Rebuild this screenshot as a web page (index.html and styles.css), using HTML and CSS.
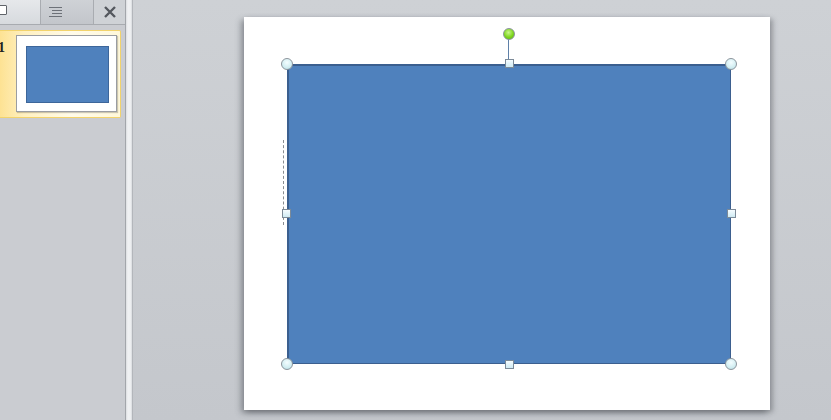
FILE: index.html
```html
<!DOCTYPE html>
<html>
<head>
<meta charset="utf-8">
<link rel="stylesheet" href="styles.css">
</head>
<body>
<div class="app">
  <aside class="panel">
    <div class="tabs">
      <div class="tab tab-slides"><span class="tab-icon"></span></div>
      <div class="tab tab-outline">
        <svg width="15" height="12" viewBox="0 0 15 12"><g stroke="#6d7178" stroke-width="1"><path d="M1 1.5h13M4 4.5h10M4 7.5h10M1 10.5h13"/></g></svg>
      </div>
      <div class="tab-close">
        <svg width="14" height="14" viewBox="0 0 14 14"><path d="M2 2L12 12M12 2L2 12" stroke="#54585e" stroke-width="2.4"/></svg>
      </div>
    </div>
    <div class="thumbs">
      <div class="thumb-row">
        <span class="num">1</span>
        <div class="thumb"><div class="thumb-shape"></div></div>
      </div>
    </div>
  </aside>
  <div class="splitter"></div>
  <main class="stage">
    <div class="slide">
      <div class="shape-wrap">
        <div class="shape"></div>
        <span class="guide"></span>
        <span class="rot-line"></span>
        <span class="rot"></span>
        <span class="h c tl"></span>
        <span class="h c tr"></span>
        <span class="h c bl"></span>
        <span class="h c br"></span>
        <span class="h s tm"></span>
        <span class="h s bm"></span>
        <span class="h s ml"></span>
        <span class="h s mr"></span>
      </div>
    </div>
  </main>
</div>
</body>
</html>
```
FILE: styles.css
```css
html, body { margin: 0; padding: 0; }
body { width: 831px; height: 420px; overflow: hidden; font-family: "Liberation Serif", serif; }
.app { display: flex; height: 420px; }
.panel { width: 125px; flex: none; background: #caccd1; display: flex; flex-direction: column; }
.tabs { height: 24px; display: flex; border-bottom: 1px solid #a8abb0; background: #d9dce0; }
.tab-slides { width: 40px; background: linear-gradient(#e6e8eb, #d7dade); position: relative; }
.tab-icon { position: absolute; left: -3px; top: 5px; width: 8px; height: 8px; border: 1px solid #60646a; background: #fff; border-radius: 1px; }
.tab-outline { width: 54px; background: linear-gradient(#cfd2d6, #c3c6cb); border-left: 1px solid #a9acb1; border-right: 1px solid #a9acb1; display: flex; align-items: center; padding-left: 7px; box-sizing: border-box; }
.tab-close { flex: 1; display: flex; align-items: center; justify-content: center; background: #cfd2d6; }
.thumbs { padding-top: 5px; }
.thumb-row { width: 121px; height: 88px; border: 1px solid #f2d36c; border-left: none; border-radius: 0 2px 2px 0; background: linear-gradient(90deg, #fde293 0%, #fff0c0 20%, #fffbea 60%, #fff8da 100%); display: flex; align-items: flex-start; box-sizing: border-box; padding-top: 4px; }
.num { font-weight: bold; font-size: 14px; color: #222; margin-left: -2px; padding-top: 6px; line-height: 14px; }
.thumb { margin-left: 11px; width: 101px; height: 77px; background: #fff; border: 1px solid #9a9da2; box-shadow: 1px 1px 1px rgba(0,0,0,0.2); box-sizing: border-box; padding: 10px 0 0 9px; }
.thumb-shape { width: 83px; height: 57px; background: #4f81bd; border: 1px solid #3d669a; box-sizing: border-box; }
.splitter { width: 8px; flex: none; box-sizing: border-box; border-left: 1px solid #a3a6ab; border-right: 1px solid #b3b6bb; background: linear-gradient(90deg, #dcdee1 0, #f1f2f4 2px, #eceef0 5px, #d2d5d9 6px); }
.stage { flex: 1; background: linear-gradient(#ced1d5, #c4c7cc); padding: 17px 0 0 111px; box-sizing: border-box; }
.slide { width: 526px; height: 393px; background: #fff; box-shadow: -3px 3px 6px rgba(60,64,70,0.45), 3px 2px 5px rgba(60,64,70,0.35); padding: 47px 0 0 43px; box-sizing: border-box; }
.shape-wrap { position: relative; width: 444px; height: 300px; }
.shape { width: 100%; height: 100%; background: #4f81bd; border: 2px solid #3b5f8f; border-width: 2px 1px 1px 2px; box-sizing: border-box; }
.h { position: absolute; box-sizing: border-box; }
.c { width: 12px; height: 12px; border-radius: 50%; border: 1.5px solid #8c949c; background: radial-gradient(circle at 50% 35%, #f4fdff 0, #d2eef2 60%, #b5dbe2 100%); }
.s { width: 9px; height: 9px; border: 1px solid #7c8a98; background: linear-gradient(#f5fcff, #cfeaf3); }
.tl { left: -6px; top: -6px; }
.tr { right: -6px; top: -6px; }
.bl { left: -6px; bottom: -6px; }
.br { right: -6px; bottom: -6px; }
.tm { left: 218px; top: -5px; }
.bm { left: 218px; bottom: -5px; }
.ml { left: -5px; top: 145px; }
.mr { right: -5px; top: 145px; }
.rot { left: 216px; top: -36px; width: 12px; height: 12px; border-radius: 50%; border: 1px solid #8a949b; background: radial-gradient(circle at 45% 35%, #c9f58c 0, #7ed61d 55%, #5cb00e 100%); position: absolute; box-sizing: border-box; }
.rot-line { position: absolute; left: 221px; top: -25px; width: 1px; height: 25px; background: #5f80a8; }
.guide { position: absolute; left: -4px; top: 76px; height: 85px; width: 0; border-left: 1px dashed #8a8d91; }
```
